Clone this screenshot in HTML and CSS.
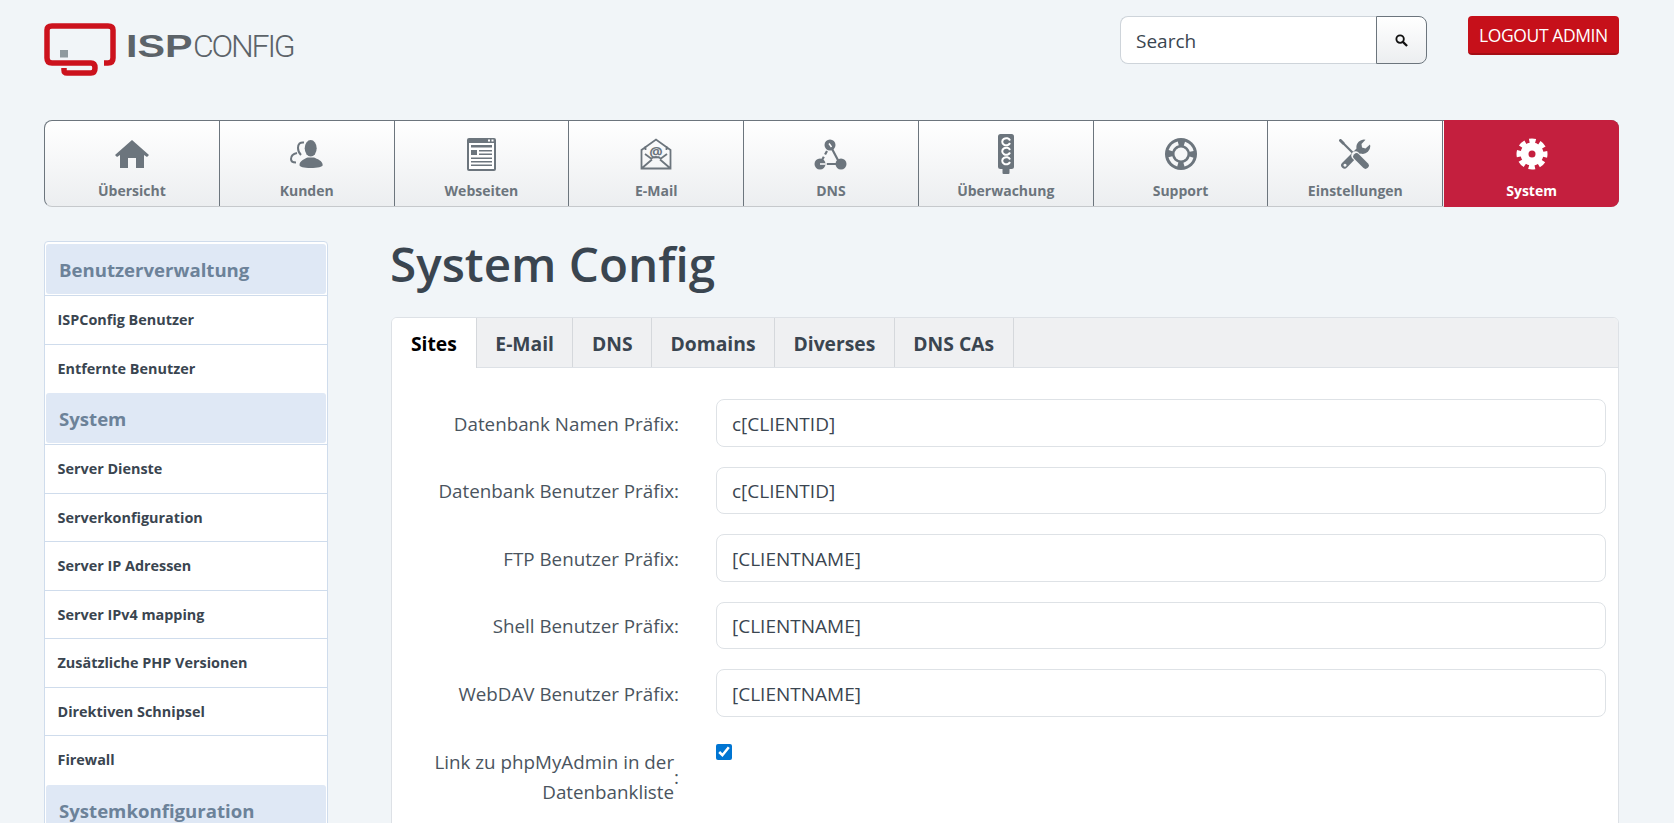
FILE: index.html
```html
<!DOCTYPE html>
<html lang="de">
<head>
<meta charset="utf-8">
<title>ISPConfig</title>
<link rel="stylesheet" href="styles.css">
</head>
<body>
<div class="page">
  <header class="top">
    <a class="logo" href="#">
      <svg class="logo-mark" viewBox="0 0 72 54" width="72" height="54">
        <path d="M60 40h4q5 0 5-5V7q0-4-5-4H8Q3 3 3 7v28q0 5 5 5h39q4 0 4 5t-4 5H23q-3 0-3-3v-2" fill="none" stroke="#cc121d" stroke-width="5.500" stroke-linejoin="round"/>
        <rect x="16" y="27" width="8" height="7.500" fill="#8f9a9f"/>
      </svg>
      <span class="logo-text"><b>ISP</b><i>CONFIG</i></span>
    </a>
    <form class="search">
      <input class="search-input" type="text" placeholder="Search">
      <button class="search-btn" type="button" aria-label="Search">
        <svg viewBox="0 0 14 14" width="13" height="13"><circle cx="5.500" cy="5.500" r="4" fill="none" stroke="#111" stroke-width="2"/><path d="M8.500 8.500 13 13" stroke="#111" stroke-width="2.400"/></svg>
      </button>
    </form>
    <a class="logout" href="#">LOGOUT ADMIN</a>
  </header>

  <nav class="mainnav">
    <a class="nav-item" href="#">
      <span class="nav-icon"><svg viewBox="0 0 34 32" width="34" height="32"><path d="M17 2 34 17l-2 2-3-2v13h-8V20h-8v10H5V17l-3 2-2-2z" fill="#6c757d"/></svg></span>
      Übersicht</a>
    <a class="nav-item" href="#">
      <span class="nav-icon"><svg viewBox="0 0 33 28" width="33" height="28"><ellipse cx="20.700" cy="8.300" rx="6" ry="8.300" fill="#6c757d"/><path d="M9.500 25c0-4 5-6 8-7.500h6.500c3 1.500 8.700 3 8.700 7.500 0 2-5 3-12 3s-11.200-1-11.200-3z" fill="#6c757d"/><path d="M14 2.500C10 2 8 4 8 8c0 3 1 5 3 7M7 13C2 14 1 17 1 19c0 2 2 3.500 5 3.500" fill="none" stroke="#6c757d" stroke-width="2"/></svg></span>
      Kunden</a>
    <a class="nav-item" href="#">
      <span class="nav-icon"><svg viewBox="0 0 29 33" width="29" height="33"><rect width="29" height="33" rx="2" fill="#6c757d"/><rect x="2" y="5" width="25" height="26" fill="#fff"/><path d="M21 1.500h2v2h-2zM24.500 1.500h2v2h-2z" fill="#fff"/><path d="M4 7h21v2.500H4zM4 12h6v5H4zM12 12h13v1.500H12zM12 15.500h13V17H12zM4 19.500h21V21H4zM4 23h21v1.500H4zM4 26.500h21V28H4z" fill="#6c757d"/></svg></span>
      Webseiten</a>
    <a class="nav-item" href="#">
      <span class="nav-icon"><svg viewBox="0 0 32 32" width="32" height="32"><path d="M1.500 30.500V12L16 1.500 30.500 12v18.500zM1.500 30.500 12 21.500M30.500 30.500 20 21.500M5 16l6 4.500q5-3 10 0l6-4.500M5.500 12V8M26.500 12V8" fill="none" stroke="#6c757d" stroke-width="1.800"/><text class="at" x="16" y="19" text-anchor="middle">@</text></svg></span>
      E-Mail</a>
    <a class="nav-item" href="#">
      <span class="nav-icon"><svg viewBox="0 0 33 31" width="33" height="31"><g fill="#6c757d"><circle cx="16" cy="6" r="5.500"/><circle cx="6" cy="25" r="5.500"/><circle cx="27" cy="25" r="5.500"/></g><path d="M16 6 26 25M6 25H26" stroke="#6c757d" stroke-width="2.200"/><path d="M13 12 8 21" stroke="#6c757d" stroke-width="2.200" stroke-dasharray="4 2.500"/><path d="M15 4.500 17.500 8M6 25h7" stroke="#fff" stroke-width="1.500"/></svg></span>
      DNS</a>
    <a class="nav-item" href="#">
      <span class="nav-icon"><svg viewBox="0 0 16 40" width="16" height="40"><rect width="16" height="35" rx="2.500" fill="#6c757d"/><rect x="4.500" y="34" width="7" height="6" rx="1" fill="#6c757d"/><g fill="none" stroke="#fff" stroke-width="2"><path d="M12 6.500a4 3.600 0 1 0 0 2.500"/><path d="M12 16a4 3.600 0 1 0 0 2.500"/><path d="M12 25.500a4 3.600 0 1 0 0 2.500"/></g></svg></span>
      Überwachung</a>
    <a class="nav-item" href="#">
      <span class="nav-icon"><svg viewBox="0 0 32 32" width="32" height="32"><circle cx="16" cy="16" r="16" fill="#6c757d"/><circle cx="16" cy="16" r="6.500" fill="#f6f7f8"/><circle cx="16" cy="16" r="11" fill="none" stroke="#f6f7f8" stroke-width="4" stroke-dasharray="11 6.280" stroke-dashoffset="-3.140"/></svg></span>
      Support</a>
    <a class="nav-item" href="#">
      <span class="nav-icon"><svg viewBox="0 0 32 30" width="32" height="30"><path fill-rule="evenodd" d="M26.500 .800 22.500 5 23 8.500 26.500 9.500 31 5.500A7.500 7.500 0 0 1 21.500 14.500L8 28.500A3.200 3.200 0 0 1 3 24L17.500 9.500A7.500 7.500 0 0 1 26.500 .800ZM6 24.800a1.500 1.500 0 1 0 .01 0Z" fill="#6c757d"/><path d="M1.500 1.500 4 4" stroke="#6c757d" stroke-width="3" stroke-linecap="round"/><path d="M4 4 17 17" stroke="#6c757d" stroke-width="2.200"/><path d="M16.500 16.500 26.500 26.500" stroke="#f6f7f8" stroke-width="8.500" stroke-linecap="round"/><path d="M17.500 17.500 26.500 26.500" stroke="#6c757d" stroke-width="6.500" stroke-linecap="round"/></svg></span>
      Einstellungen</a>
    <a class="nav-item is-active" href="#">
      <span class="nav-icon"><svg viewBox="0 0 32 32" width="32" height="32"><circle cx="16" cy="16" r="11.500" fill="#fff"/><circle cx="16" cy="16" r="13" fill="none" stroke="#fff" stroke-width="5" stroke-dasharray="6.200 4" stroke-dashoffset="3"/><circle cx="16" cy="16" r="3.500" fill="#c41f3e"/></svg></span>
      System</a>
  </nav>

  <div class="layout">
    <aside class="sidebar">
      <h3 class="side-head">Benutzerverwaltung</h3>
      <a class="side-link" href="#">ISPConfig Benutzer</a>
      <a class="side-link" href="#">Entfernte Benutzer</a>
      <h3 class="side-head">System</h3>
      <a class="side-link" href="#">Server Dienste</a>
      <a class="side-link" href="#">Serverkonfiguration</a>
      <a class="side-link" href="#">Server IP Adressen</a>
      <a class="side-link" href="#">Server IPv4 mapping</a>
      <a class="side-link" href="#">Zusätzliche PHP Versionen</a>
      <a class="side-link" href="#">Direktiven Schnipsel</a>
      <a class="side-link" href="#">Firewall</a>
      <h3 class="side-head">Systemkonfiguration</h3>
    </aside>
    <main class="content">
      <h1 class="title">System Config</h1>
      <section class="card">
        <div class="tabs">
          <a class="tab is-current" href="#">Sites</a>
          <a class="tab" href="#">E-Mail</a>
          <a class="tab" href="#">DNS</a>
          <a class="tab" href="#">Domains</a>
          <a class="tab" href="#">Diverses</a>
          <a class="tab" href="#">DNS CAs</a>
        </div>
        <form class="form">
          <div class="row"><label class="label">Datenbank Namen Präfix:</label><input class="field" type="text" value="c[CLIENTID]"></div>
          <div class="row"><label class="label">Datenbank Benutzer Präfix:</label><input class="field" type="text" value="c[CLIENTID]"></div>
          <div class="row"><label class="label">FTP Benutzer Präfix:</label><input class="field" type="text" value="[CLIENTNAME]"></div>
          <div class="row"><label class="label">Shell Benutzer Präfix:</label><input class="field" type="text" value="[CLIENTNAME]"></div>
          <div class="row"><label class="label">WebDAV Benutzer Präfix:</label><input class="field" type="text" value="[CLIENTNAME]"></div>
          <div class="row row-check"><label class="label label-multi"><span class="label-text">Link zu phpMyAdmin in der Datenbankliste</span><span class="colon">:</span></label><input class="check" type="checkbox" checked></div>
        </form>
      </section>
    </main>
  </div>
</div>
</body>
</html>
```
FILE: styles.css
```css
* { box-sizing: border-box; }
html, body { margin: 0; height: 100%; overflow: hidden; }
body { background: #f1f5f8; color: #3a4550; font-family: "Open Sans", "Noto Sans", sans-serif; }
a { text-decoration: none; color: inherit; }

.page { height: 823px; overflow: hidden; padding: 16px 55px 0 44px; }

.top { display: flex; align-items: flex-start; height: 104px; }
.logo { display: flex; align-items: center; gap: 10px; margin-top: 7px; }
.logo-mark { display: block; }
.logo-text { font-size: 32px; line-height: 40px; color: #5c6369; display: flex; margin-top: -8px; }
.logo-text b { font-family: "Liberation Sans", sans-serif; font-weight: 700; display: inline-block; transform: scaleX(1.29); transform-origin: left; width: 67px; }
.logo-text i { font-family: Roboto, sans-serif; font-weight: 300; font-style: normal; letter-spacing: -2.200px; }

.search { display: flex; margin-left: auto; width: 307px; height: 48px; }
.search-input { flex: 1; min-width: 0; height: 48px; padding: 1px 15px 0; border: 1px solid #ced4da; border-right: 0; border-radius: 8px 0 0 8px; background: #fff; font: 400 19px "Open Sans", sans-serif; color: #3a4550; }
.search-input::placeholder { color: #3a4550; opacity: 1; }
.search-btn { width: 51px; height: 48px; padding: 0; border: 1px solid #6c757d; border-radius: 0 8px 8px 0; background: linear-gradient(#fff, #eceef0); display: flex; align-items: center; justify-content: center; }
.logout { margin-left: 41px; width: 151px; height: 39px; display: flex; align-items: center; justify-content: center; background: #c6101a; border-bottom: 2px solid #a50d15; border-radius: 4px; color: #fff; font-size: 17.500px; letter-spacing: -.4px; }

.mainnav { display: grid; grid-template-columns: repeat(9, 1fr); height: 87px; border: 1px solid #6c757d; border-bottom-color: #c6c9cc; border-radius: 8px; background: linear-gradient(#fff, #eceef0); }
.nav-item { display: flex; flex-direction: column; align-items: center; padding-top: 14px; border-right: 1px solid #6c757d; font-size: 14px; font-weight: 700; color: #6c757d; line-height: 20px; }
.nav-icon { height: 40px; margin-bottom: 7px; display: flex; align-items: center; justify-content: center; margin-top: -1px; }
.nav-icon svg { display: block; }
.nav-item:last-child { border-right: 0; }
.is-active { background: #c41f3e; color: #fff; margin: -1px -1px -1px 1px; border-radius: 0 8px 8px 0; padding-top: 15px; }
.at { font: 700 15px "Open Sans", sans-serif; fill: #6c757d; }

.layout { display: flex; align-items: flex-start; gap: 63px; margin-top: 34px; }
.sidebar { flex: 0 0 284px; background: #fff; border: 1px solid #cfdcec; border-radius: 4px; padding: 2px 0 0; }
.side-head { margin: 0 1px; height: 50px; padding: 0 13px; background: #dfe8f5; border-radius: 3px; font-size: 18.600px; font-weight: 700; line-height: 52px; color: #6c8299; }
.side-link { display: block; height: 48.500px; padding: 0 12.500px; border-top: 1px solid #cfdcec; font-size: 14.400px; font-weight: 700; line-height: 47px; color: #3a4550; }
.side-head + .side-link { margin-top: 1px; }
.side-link + .side-head { margin-top: 1px; }

.content { flex: 1; min-width: 0; }
.title { margin: -10px 0 20px -1px; font-size: 47.600px; font-weight: 600; line-height: 66px; color: #3a4550; }
.card { background: #fff; border: 1px solid #dde1e6; border-radius: 6px; overflow: hidden; }
.tabs { display: flex; height: 50px; background: #eff0f2; border-bottom: 1px solid #dde1e6; }
.tab { padding: 0 18.500px; border-right: 1px solid #d5d8dc; font-size: 19.300px; font-weight: 700; line-height: 52px; color: #3a4550; }
.tab.is-current { height: 50px; padding: 0 19px; background: #fff; color: #000; }
.form { padding: 31px 12px 120px; display: flex; flex-direction: column; gap: 20px; }
.row { display: flex; align-items: center; gap: 37px; }
.label { flex: 0 0 275px; display: flex; justify-content: flex-end; align-items: center; text-align: right; font-size: 18.800px; line-height: 30px; color: #4a545e; padding-top: 2px; }
.field { flex: 1; min-width: 0; height: 47.500px; padding: 2px 15px 0; border: 1px solid #dee2e6; border-radius: 8px; background: #fff; font: 400 19px "Open Sans", sans-serif; color: #3a4550; }
.row-check { align-items: flex-start; gap: 37px; margin-top: 7px; }
.label-text { display: block; }
.label-multi { margin-top: 3px; padding-top: 0; }
.check { width: 16px; height: 16px; margin: 0; accent-color: #0075d2; }
```
